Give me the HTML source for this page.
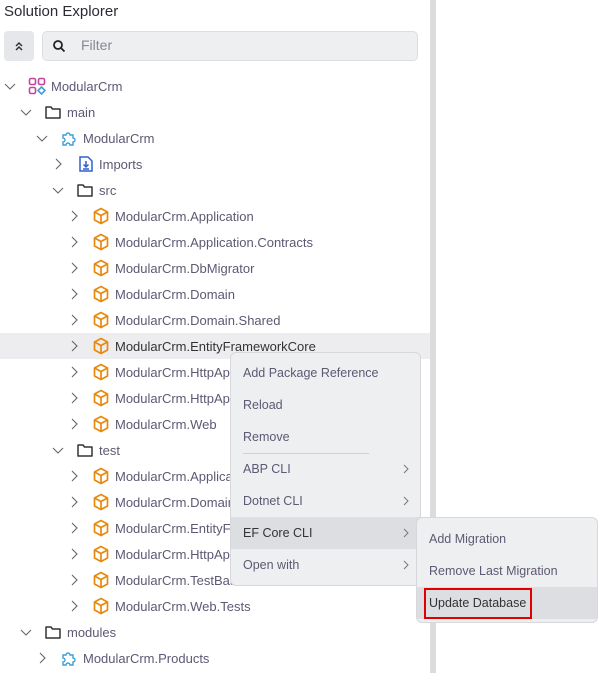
<!DOCTYPE html>
<html><head><style>
*{margin:0;padding:0;box-sizing:border-box}
body{width:614px;height:673px;background:#fff;font-family:"Liberation Sans",sans-serif;color:#5e5873;position:relative;overflow:hidden}
.abs{position:absolute}
.title{left:4px;top:3px;font-size:15px;color:#2b2b33}
.row{position:absolute;left:0;width:428px;height:26px;font-size:13px;line-height:26px}
.row span.t{position:absolute;top:1px}
.chev{position:absolute;top:7px}
.ico{position:absolute;top:4px}
.menu{position:absolute;background:#eeeff1;border:1px solid #d8d8dc;border-radius:6px;font-size:12.5px;color:#5e5873}
.mi{position:absolute;left:0;right:0;height:32px;line-height:32px;padding-left:12px}
.arr{position:absolute;right:10px;top:11px}
</style></head><body>
<div class="abs title">Solution Explorer</div>
<div class="abs" style="left:4px;top:31px;width:30px;height:30px;background:#e6e7ea;border-radius:4px"></div>
<svg class="abs" style="left:12px;top:39px" width="14" height="14" viewBox="0 0 14 14" fill="none" stroke="#333" stroke-width="1.5"><path d="M4 7l3-3 3 3M4 11l3-3 3 3"/></svg>
<div class="abs" style="left:42px;top:31px;width:376px;height:30px;background:#eeeff1;border:1px solid #dcdde0;border-radius:5px"></div>
<svg class="abs" style="left:52px;top:39px" width="14" height="14" viewBox="0 0 14 14" fill="none" stroke="#222" stroke-width="1.8"><circle cx="6" cy="6" r="4"/><path d="M9 9l3.5 3.5"/></svg>
<div class="abs" style="left:81px;top:37px;font-size:14px;color:#8a8598">Filter</div>
<div class="abs" style="left:430px;top:0;width:6px;height:673px;background:#dcdcdf"></div>
<div class="abs" style="left:0;top:333px;width:430px;height:26px;background:#ededf0"></div>

<svg width="0" height="0" style="position:absolute">
<defs>
<symbol id="cd" viewBox="0 0 12 12"><path d="M1 4l5 5 5-5" fill="none" stroke="#666" stroke-width="1.1"/></symbol>
<symbol id="cr" viewBox="0 0 12 12"><path d="M4 1l5 5-5 5" fill="none" stroke="#666" stroke-width="1.1"/></symbol>
<symbol id="box" viewBox="0 0 18 18"><path d="M9 1.5l6.5 3.5v8L9 16.5 2.5 13V5z M2.5 5L9 8.5 15.5 5 M9 8.5v8" fill="none" stroke="#e8890c" stroke-width="1.7" stroke-linejoin="round"/></symbol>
<symbol id="fold" viewBox="0 0 18 18"><path d="M2 4h5l1.5 2H16v9H2z" fill="none" stroke="#333" stroke-width="1.5" stroke-linejoin="round"/></symbol>
<symbol id="puz" viewBox="0 0 18 18"><path d="M3 6h3a2 2 0 1 1 4 0h3v3a2 2 0 1 1 0 4v3h-3a2 2 0 1 0-4 0H3v-3a2 2 0 1 0 0-4z" fill="none" stroke="#3aa0d8" stroke-width="1.4"/></symbol>
</defs></svg>

<div class="row" style="top:73px"><svg class="chev" style="left:4px" width="12" height="12"><use href="#cd"/></svg>
<svg class="ico" style="left:28px" width="18" height="18" viewBox="0 0 18 18" fill="none" stroke-width="1.6"><rect x="1.5" y="1.5" width="6" height="6" rx="1.5" stroke="#c3449b"/><rect x="10.5" y="1.5" width="6" height="6" rx="1.5" stroke="#c3449b"/><rect x="1.5" y="10.5" width="6" height="6" rx="1.5" stroke="#c3449b"/><path d="M13.5 10l3.5 3.5-3.5 3.5-3.5-3.5z" stroke="#3aa0d8"/></svg>
<span class="t" style="left:51px">ModularCrm</span></div>
<div class="row" style="top:99px"><svg class="chev" style="left:20px" width="12" height="12"><use href="#cd"/></svg><svg class="ico" style="left:44px" width="18" height="18"><use href="#fold"/></svg><span class="t" style="left:67px">main</span></div>
<div class="row" style="top:125px"><svg class="chev" style="left:36px" width="12" height="12"><use href="#cd"/></svg><svg class="ico" style="left:60px" width="18" height="18"><use href="#puz"/></svg><span class="t" style="left:83px">ModularCrm</span></div>
<div class="row" style="top:151px"><svg class="chev" style="left:52px" width="12" height="12"><use href="#cr"/></svg>
<svg class="ico" style="left:77px" width="18" height="18" viewBox="0 0 18 18" fill="none" stroke="#2f5fd0" stroke-width="1.5"><path d="M3 2h8l4 4v10H3z"/><path d="M9 6v6M6.5 9.5L9 12l2.5-2.5M6 14h6"/></svg>
<span class="t" style="left:99px">Imports</span></div>
<div class="row" style="top:177px"><svg class="chev" style="left:52px" width="12" height="12"><use href="#cd"/></svg><svg class="ico" style="left:76px" width="18" height="18"><use href="#fold"/></svg><span class="t" style="left:99px">src</span></div>
<div class="row" style="top:203px"><svg class="chev" style="left:68px" width="12" height="12"><use href="#cr"/></svg><svg class="ico" style="left:92px" width="18" height="18"><use href="#box"/></svg><span class="t" style="left:115px">ModularCrm.Application</span></div>
<div class="row" style="top:229px"><svg class="chev" style="left:68px" width="12" height="12"><use href="#cr"/></svg><svg class="ico" style="left:92px" width="18" height="18"><use href="#box"/></svg><span class="t" style="left:115px">ModularCrm.Application.Contracts</span></div>
<div class="row" style="top:255px"><svg class="chev" style="left:68px" width="12" height="12"><use href="#cr"/></svg><svg class="ico" style="left:92px" width="18" height="18"><use href="#box"/></svg><span class="t" style="left:115px">ModularCrm.DbMigrator</span></div>
<div class="row" style="top:281px"><svg class="chev" style="left:68px" width="12" height="12"><use href="#cr"/></svg><svg class="ico" style="left:92px" width="18" height="18"><use href="#box"/></svg><span class="t" style="left:115px">ModularCrm.Domain</span></div>
<div class="row" style="top:307px"><svg class="chev" style="left:68px" width="12" height="12"><use href="#cr"/></svg><svg class="ico" style="left:92px" width="18" height="18"><use href="#box"/></svg><span class="t" style="left:115px">ModularCrm.Domain.Shared</span></div>
<div class="row" style="top:333px;color:#333"><svg class="chev" style="left:68px" width="12" height="12"><use href="#cr"/></svg><svg class="ico" style="left:92px" width="18" height="18"><use href="#box"/></svg><span class="t" style="left:115px">ModularCrm.EntityFrameworkCore</span></div>
<div class="row" style="top:359px"><svg class="chev" style="left:68px" width="12" height="12"><use href="#cr"/></svg><svg class="ico" style="left:92px" width="18" height="18"><use href="#box"/></svg><span class="t" style="left:115px">ModularCrm.HttpApi</span></div>
<div class="row" style="top:385px"><svg class="chev" style="left:68px" width="12" height="12"><use href="#cr"/></svg><svg class="ico" style="left:92px" width="18" height="18"><use href="#box"/></svg><span class="t" style="left:115px">ModularCrm.HttpApi</span></div>
<div class="row" style="top:411px"><svg class="chev" style="left:68px" width="12" height="12"><use href="#cr"/></svg><svg class="ico" style="left:92px" width="18" height="18"><use href="#box"/></svg><span class="t" style="left:115px">ModularCrm.Web</span></div>
<div class="row" style="top:437px"><svg class="chev" style="left:52px" width="12" height="12"><use href="#cd"/></svg><svg class="ico" style="left:76px" width="18" height="18"><use href="#fold"/></svg><span class="t" style="left:99px">test</span></div>
<div class="row" style="top:463px"><svg class="chev" style="left:68px" width="12" height="12"><use href="#cr"/></svg><svg class="ico" style="left:92px" width="18" height="18"><use href="#box"/></svg><span class="t" style="left:115px">ModularCrm.Application</span></div>
<div class="row" style="top:489px"><svg class="chev" style="left:68px" width="12" height="12"><use href="#cr"/></svg><svg class="ico" style="left:92px" width="18" height="18"><use href="#box"/></svg><span class="t" style="left:115px">ModularCrm.Domain</span></div>
<div class="row" style="top:515px"><svg class="chev" style="left:68px" width="12" height="12"><use href="#cr"/></svg><svg class="ico" style="left:92px" width="18" height="18"><use href="#box"/></svg><span class="t" style="left:115px">ModularCrm.EntityFramework</span></div>
<div class="row" style="top:541px"><svg class="chev" style="left:68px" width="12" height="12"><use href="#cr"/></svg><svg class="ico" style="left:92px" width="18" height="18"><use href="#box"/></svg><span class="t" style="left:115px">ModularCrm.HttpApi</span></div>
<div class="row" style="top:567px"><svg class="chev" style="left:68px" width="12" height="12"><use href="#cr"/></svg><svg class="ico" style="left:92px" width="18" height="18"><use href="#box"/></svg><span class="t" style="left:115px">ModularCrm.TestBase</span></div>
<div class="row" style="top:593px"><svg class="chev" style="left:68px" width="12" height="12"><use href="#cr"/></svg><svg class="ico" style="left:92px" width="18" height="18"><use href="#box"/></svg><span class="t" style="left:115px">ModularCrm.Web.Tests</span></div>
<div class="row" style="top:619px"><svg class="chev" style="left:20px" width="12" height="12"><use href="#cd"/></svg><svg class="ico" style="left:44px" width="18" height="18"><use href="#fold"/></svg><span class="t" style="left:67px">modules</span></div>
<div class="row" style="top:645px"><svg class="chev" style="left:36px" width="12" height="12"><use href="#cr"/></svg><svg class="ico" style="left:60px" width="18" height="18"><use href="#puz"/></svg><span class="t" style="left:83px">ModularCrm.Products</span></div>

<div class="menu" style="left:230px;top:352px;width:191px;height:234px">
<div class="mi" style="top:4px">Add Package Reference</div>
<div class="mi" style="top:36px">Reload</div>
<div class="mi" style="top:68px">Remove</div>
<div style="position:absolute;left:12px;top:100px;width:126px;height:1px;background:#d0d0d4"></div>
<div class="mi" style="top:100px">ABP CLI<svg class="arr" width="8" height="10"><path d="M2 1l4 4-4 4" fill="none" stroke="#777"/></svg></div>
<div class="mi" style="top:132px">Dotnet CLI<svg class="arr" width="8" height="10"><path d="M2 1l4 4-4 4" fill="none" stroke="#777"/></svg></div>
<div class="mi" style="top:164px;background:#dddee1;color:#333">EF Core CLI<svg class="arr" width="8" height="10"><path d="M2 1l4 4-4 4" fill="none" stroke="#777"/></svg></div>
<div class="mi" style="top:196px">Open with<svg class="arr" width="8" height="10"><path d="M2 1l4 4-4 4" fill="none" stroke="#777"/></svg></div>
</div>
<div class="menu" style="left:416px;top:517px;width:182px;height:106px">
<div class="mi" style="top:5px">Add Migration</div>
<div class="mi" style="top:37px">Remove Last Migration</div>
<div class="mi" style="top:69px;background:#dddee1;color:#333">Update Database</div>
</div>
<div class="abs" style="left:424px;top:588px;width:108px;height:31px;border:2px solid #e00000"></div>
</body></html>
